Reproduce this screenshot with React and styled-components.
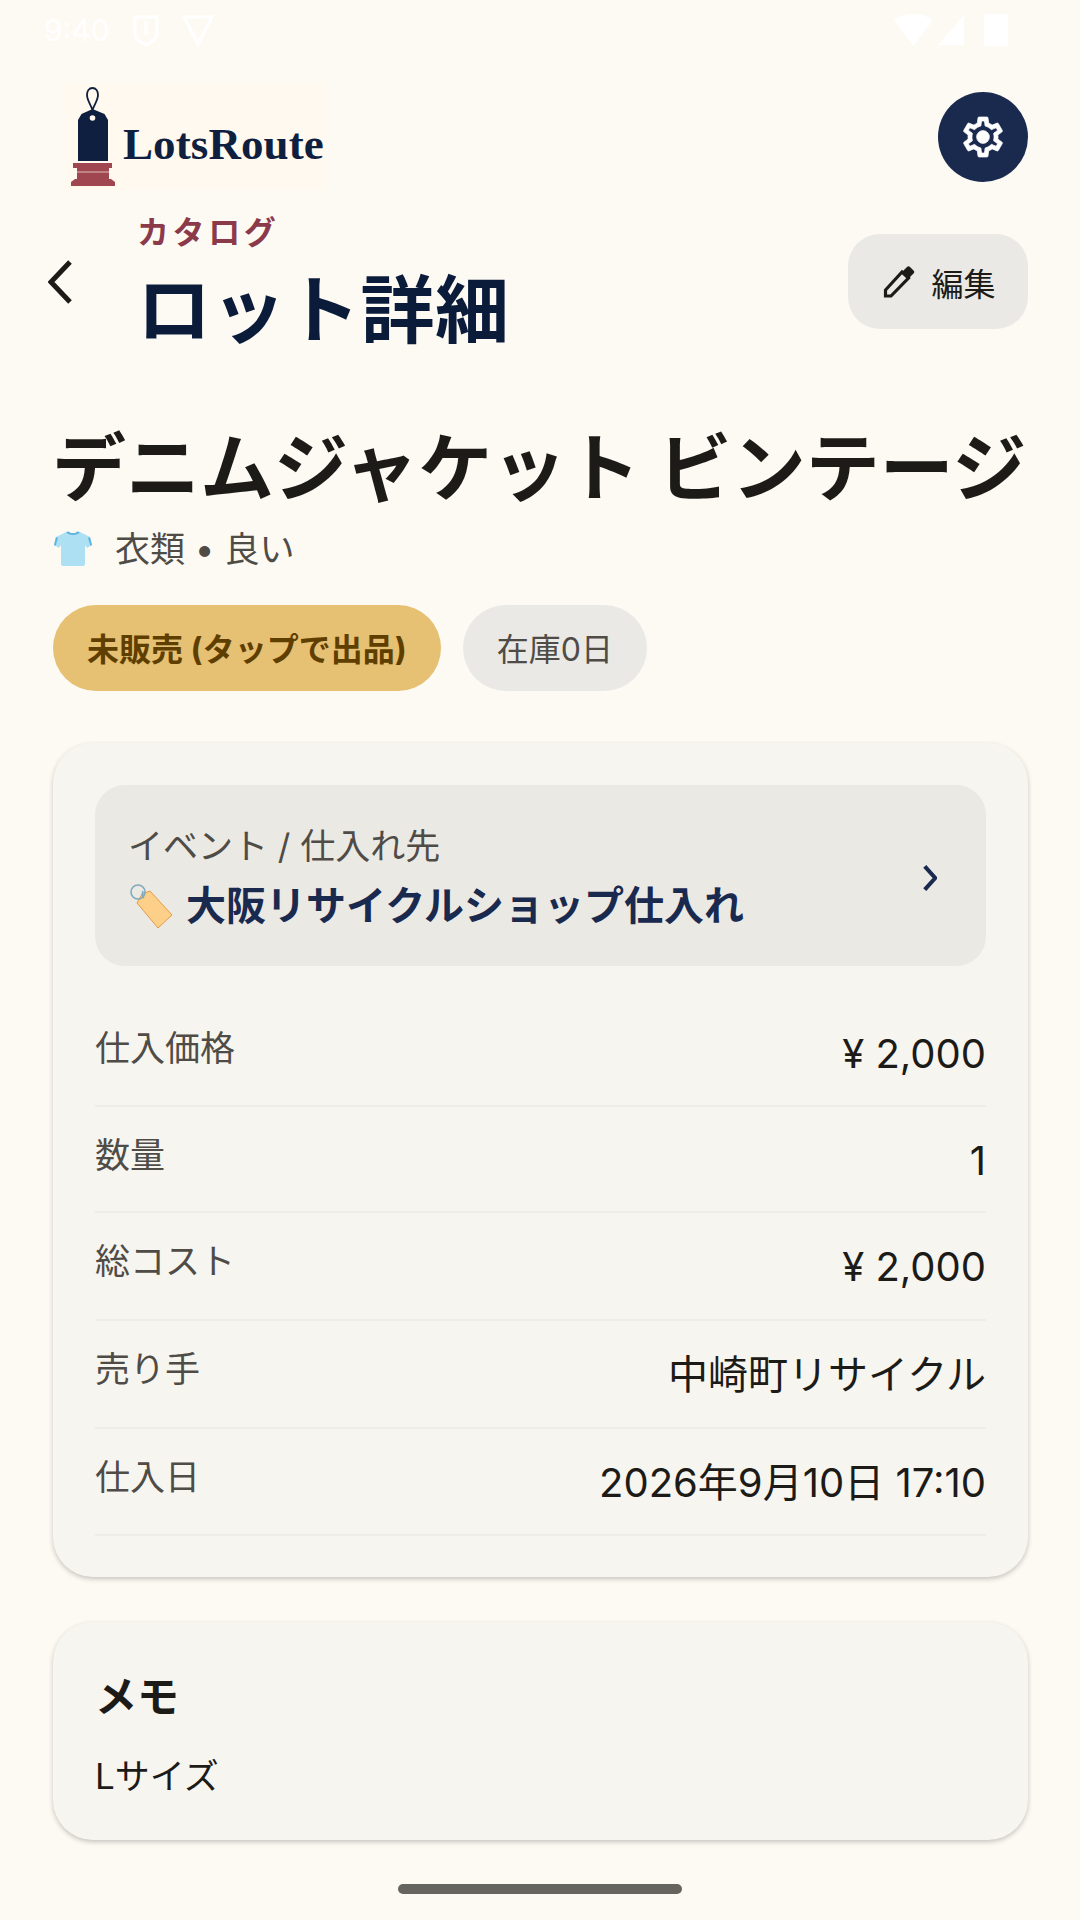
import React from "react";
import styled, { createGlobalStyle } from "styled-components";

const Global = createGlobalStyle`
  html, body { margin: 0; padding: 0; background: #fdfaf4; }
  * { box-sizing: border-box; }
  #root { width: 1080px; height: 1920px; overflow: hidden; }
`;
const Page = styled.div`
  width: 1080px; height: 1920px; background: #fdfaf4; display: flex; flex-direction: column;
  font-family: Inter, "Noto Sans CJK JP", sans-serif; color: #1c1b17; position: relative;
`;
const StatusBar = styled.div`
  height: 60px; padding: 0 72px 0 44px; display: flex; align-items: center; justify-content: space-between;
  color: #ffffff; font-size: 30px; flex: none;
`;
const StatusGroup = styled.div`display: flex; align-items: center; gap: 20px;`;
const TopBar = styled.div`
  height: 146px; padding: 20px 52px 0 66px; display: flex; align-items: flex-start; justify-content: space-between; flex: none;
`;
const Logo = styled.div`
  width: 260px; height: 106px; background: #fff9ef; display: flex; align-items: flex-start; padding: 1px 0 0 4px; gap: 7px;
  margin-top: 4px;
`;
const LogoText = styled.span`
  font-family: "Liberation Serif", serif; font-weight: 700; font-size: 45px; color: #0f1f3f; line-height: 1; margin-top: 37px; letter-spacing: 0.1px;
`;
const GearButton = styled.div`
  width: 90px; height: 90px; border-radius: 50%; background: #1a2a4f; display: flex; align-items: center; justify-content: center; margin-top: 12px;
`;
const Header = styled.div`
  height: 128px; display: flex; align-items: flex-start; padding: 5px 52px 0 48px; flex: none;
`;
const Back = styled.div`width: 40px; height: 60px; margin-top: 49px; flex: none;`;
const HeaderText = styled.div`flex: 1; padding-left: 49px;`;
const Eyebrow = styled.div`
  color: #8b3a4a; font-size: 32px; font-weight: 700; letter-spacing: 3.6px; line-height: 44px;
`;
const PageTitle = styled.h1`
  margin: 15px 0 0 0; color: #0b1b3a; font-size: 74px; font-weight: 700; line-height: 80px; letter-spacing: 0.5px;
`;
const EditButton = styled.div`
  width: 180px; height: 95px; border-radius: 32px; background: #ebe9e5; display: flex; align-items: center; justify-content: center; gap: 16px; font-size: 32px; margin-top: 23px; padding-left: 3px;
`;
const Content = styled.div`padding: 0 52px 0 53px; flex: 1; display: flex; flex-direction: column;`;
const ItemTitle = styled.h2`
  margin: 82px 0 0 -1px; font-size: 74px; font-weight: 700; line-height: 104px; white-space: nowrap; color: #1c1b17;
`;
const Meta = styled.div`
  display: flex; align-items: center; gap: 22px; font-size: 35px; color: #4f4c47; line-height: 48px; margin-top: 5px;
`;
const Chips = styled.div`display: flex; gap: 22px; margin-top: 32px;`;
const Chip = styled.div`
  height: 86px; border-radius: 43px; padding: 0 34px 3px; display: flex; align-items: center; font-size: 32px;
  background: ${p => p.$accent ? "#e6c073" : "#ebe9e5"}; color: ${p => p.$accent ? "#5f3f00" : "#4f4c47"}; font-weight: ${p => p.$accent ? 700 : 400};
`;
const Card = styled.div`
  background: #f7f5ef; border-radius: 40px; box-shadow: 0 2px 5px rgba(0,0,0,.22); padding: ${p => p.$pad};
  margin-top: ${p => p.$top}px;
`;
const EventBox = styled.div`
  height: 181px; border-radius: 30px; background: #ebe9e4; display: flex; align-items: center; justify-content: space-between; padding: 4px 49px 0 33px; margin-bottom: 34px;
`;
const EventLabel = styled.div`font-size: 35px; color: #4f4c47; line-height: 48px;`;
const EventName = styled.div`
  font-size: 40px; font-weight: 700; color: #1a2a4f; display: flex; align-items: center; gap: 12px; line-height: 56px; margin-top: 8px;
`;
const Row = styled.div`
  height: ${p => p.$h}px; border-bottom: 2px solid #efede8; display: flex; justify-content: space-between; align-items: flex-start; padding-top: 24px;
`;
const RowLabel = styled.div`font-size: 35px; color: #4f4c47; line-height: 48px;`;
const RowValue = styled.div`font-size: 40px; color: #1c1b17; line-height: 56px; margin-top: 2px;`;
const MemoTitle = styled.div`font-size: 42px; font-weight: 700; line-height: 60px;`;
const MemoBody = styled.div`font-size: 35px; line-height: 48px; margin-top: 25px;`;
const HomeBar = styled.div`
  position: absolute; left: 398px; top: 1884px; width: 284px; height: 10px; border-radius: 5px; background: #66645f;
`;

const LogoMark = () => (
  <svg width="46" height="102" viewBox="0 0 46 102" style={{flex:"none"}}>
    <path d="M22.500 3c-3.500 0-5.500 3-5.500 7 0 5 3.500 9 5.500 15 2-6 5.500-10 5.500-15 0-4-2-7-5.500-7z" fill="none" stroke="#0f1f3f" strokeWidth="1.800"/>
    <path d="M22.500 24l12 5 3.500 6v41H8V35l3.500-6z" fill="#0f1f3f"/>
    <circle cx="22.500" cy="33" r="2.800" fill="#fff9ef"/>
    <path d="M3 78h39v5h-3v11h2l4 3v4H1v-4l4-3h2V83H3z" fill="#a04650"/>
    <path d="M7 87h32" stroke="#d9aca8" strokeWidth="1.200"/>
  </svg>
);
const Gear = () => (
  <svg width="48" height="48" viewBox="0 0 24 24" fill="#fff" stroke="#fff" strokeWidth="0.35">
    <path d="M19.43 12.98c.04-.32.07-.64.07-.98s-.03-.66-.07-.98l2.11-1.65c.19-.15.24-.42.12-.64l-2-3.46c-.12-.22-.39-.3-.61-.22l-2.49 1c-.52-.4-1.08-.73-1.69-.98l-.38-2.65C14.46 2.18 14.25 2 14 2h-4c-.25 0-.46.18-.49.42l-.38 2.65c-.61.25-1.17.59-1.69.98l-2.49-1c-.23-.09-.49 0-.61.22l-2 3.46c-.13.22-.07.49.12.64l2.11 1.65c-.04.32-.07.65-.07.98s.03.66.07.98l-2.11 1.65c-.19.15-.24.42-.12.64l2 3.46c.12.22.39.3.61.22l2.49-1c.52.4 1.08.73 1.69.98l.38 2.65c.03.24.24.42.49.42h4c.25 0 .46-.18.49-.42l.38-2.65c.61-.25 1.17-.59 1.69-.98l2.49 1c.23.09.49 0 .61-.22l2-3.46c.12-.22.07-.49-.12-.64l-2.11-1.65zM17.45 11.27c.04.31.05.52.05.73 0 .21-.02.43-.05.73l-.14 1.13.89.7 1.08.84-.7 1.21-1.27-.51-1.04-.42-.9.68c-.43.32-.84.56-1.25.73l-1.06.43-.16 1.13-.2 1.35h-1.4l-.19-1.35-.16-1.13-1.06-.43c-.43-.18-.83-.41-1.23-.71l-.91-.7-1.06.43-1.27.51-.7-1.21 1.08-.84.89-.7-.14-1.13c-.03-.31-.05-.54-.05-.74s.02-.43.05-.73l.14-1.13-.89-.7-1.08-.84.7-1.21 1.27.51 1.04.42.9-.68c.43-.32.84-.56 1.25-.73l1.06-.43.16-1.13.2-1.35h1.39l.19 1.35.16 1.13 1.06.43c.43.18.83.41 1.23.71l.91.7 1.06-.43 1.27-.51.7 1.21-1.07.85-.89.7.14 1.13z"/>
    <circle cx="12" cy="12" r="3.2"/>
  </svg>
);
const Pencil = () => (
  <svg width="32" height="34" viewBox="0 0 32 34">
    <path d="M2.500 31v-6L19 7l6.500 6L8 31z" fill="none" stroke="#1c1b17" strokeWidth="3.200" strokeLinejoin="miter"/>
    <path d="M19 7l5-5c1-1 2-1 3 0l3.500 3.500c1 1 1 2 0 3l-5 5z" fill="#1c1b17"/>
  </svg>
);
const Chevron = ({ w, h, sw, color, dir }) => (
  <svg width={w} height={h} viewBox="0 0 24 44" style={{flex:"none"}}>
    <path d={dir === "left" ? "M22 2L3 22l19 20" : "M3 2l18 20L3 42"} fill="none" stroke={color} strokeWidth={sw} />
  </svg>
);
const Shirt = () => (
  <svg width="40" height="36" viewBox="0 0 40 36" style={{flex:"none"}}>
    <path d="M13 1L3 6 1 14l5 3 2-3v19c0 1 1 2 2 2h20c1 0 2-1 2-2V14l2 3 5-3-2-8-10-5c-2 2-12 2-14 0z" fill="#aee0f3"/>
    <path d="M13 1c2 4 12 4 14 0l-3-.5c-1 2-7 2-8 0zM3 6L1 14l1.500 1 2.500-8zM37 6l2 8-1.500 1-2.500-8z" fill="#5eb5e0"/>
  </svg>
);
const TagEmoji = () => (
  <svg width="46" height="46" viewBox="0 0 46 46" style={{flex:"none"}}>
    <path d="M14 11l8-3 22 24-14 13L9 20z" fill="#fdd08a" stroke="#e69a45" strokeWidth="1"/>
    <circle cx="10" cy="9" r="7" fill="none" stroke="#7fa9bd" strokeWidth="1.600"/>
    <path d="M15 8c-1 3-1 5 1 7" fill="none" stroke="#7fa9bd" strokeWidth="1.600"/>
  </svg>
);
const StatusLeftIcon = ({ tri }) => (
  <svg width="32" height="34" viewBox="0 0 32 34" fill="none" stroke="#fff" strokeWidth="3">
    {tri ? <path d="M2 4h28L16 31z"/> : <path d="M5 4h22v16c0 6-6 10-11 12C11 30 5 26 5 20zM16 8v14"/>}
  </svg>
);
const StatusIcons = () => (
  <svg width="114" height="36" viewBox="0 0 114 36" fill="#fff">
    <path d="M0 8c11-8 28-8 39 0L19.500 34z"/><path d="M70 3v30H44z"/><rect x="90" y="2" width="24" height="32" rx="3"/>
  </svg>
);

const rows = [
  ["仕入価格", "¥ 2,000", 107],
  ["数量", "1", 106],
  ["総コスト", "¥ 2,000", 108],
  ["売り手", "中崎町リサイクル", 108],
  ["仕入日", "2026年9月10日 17:10", 107],
];

export default function App() {
  return (
    <Page>
      <Global />
      <StatusBar>
        <StatusGroup><span>9:40</span><StatusLeftIcon /><StatusLeftIcon tri /></StatusGroup>
        <StatusIcons />
      </StatusBar>
      <TopBar>
        <Logo><LogoMark /><LogoText>LotsRoute</LogoText></Logo>
        <GearButton><Gear /></GearButton>
      </TopBar>
      <Header>
        <Back><Chevron w={24} h={44} sw={5} color="#1c1b17" dir="left" /></Back>
        <HeaderText>
          <Eyebrow>カタログ</Eyebrow>
          <PageTitle>ロット詳細</PageTitle>
        </HeaderText>
        <EditButton><Pencil />編集</EditButton>
      </Header>
      <Content>
        <ItemTitle>デニムジャケット ビンテージ</ItemTitle>
        <Meta><Shirt /><span>衣類 • 良い</span></Meta>
        <Chips>
          <Chip $accent>未販売 (タップで出品)</Chip>
          <Chip>在庫0日</Chip>
        </Chips>
        <Card $top={52} $pad="42px 42px 41px">
          <EventBox>
            <div>
              <EventLabel>イベント / 仕入れ先</EventLabel>
              <EventName><TagEmoji />大阪リサイクルショップ仕入れ</EventName>
            </div>
            <Chevron w={14} h={26} sw={7} color="#1a2a4f" dir="right" />
          </EventBox>
          {rows.map(([l, v, h]) => (
            <Row key={l} $h={h}><RowLabel>{l}</RowLabel><RowValue>{v}</RowValue></Row>
          ))}
        </Card>
        <Card $top={45} $pad="45px 42px 40px">
          <MemoTitle>メモ</MemoTitle>
          <MemoBody>Lサイズ</MemoBody>
        </Card>
      </Content>
      <HomeBar />
    </Page>
  );
}
